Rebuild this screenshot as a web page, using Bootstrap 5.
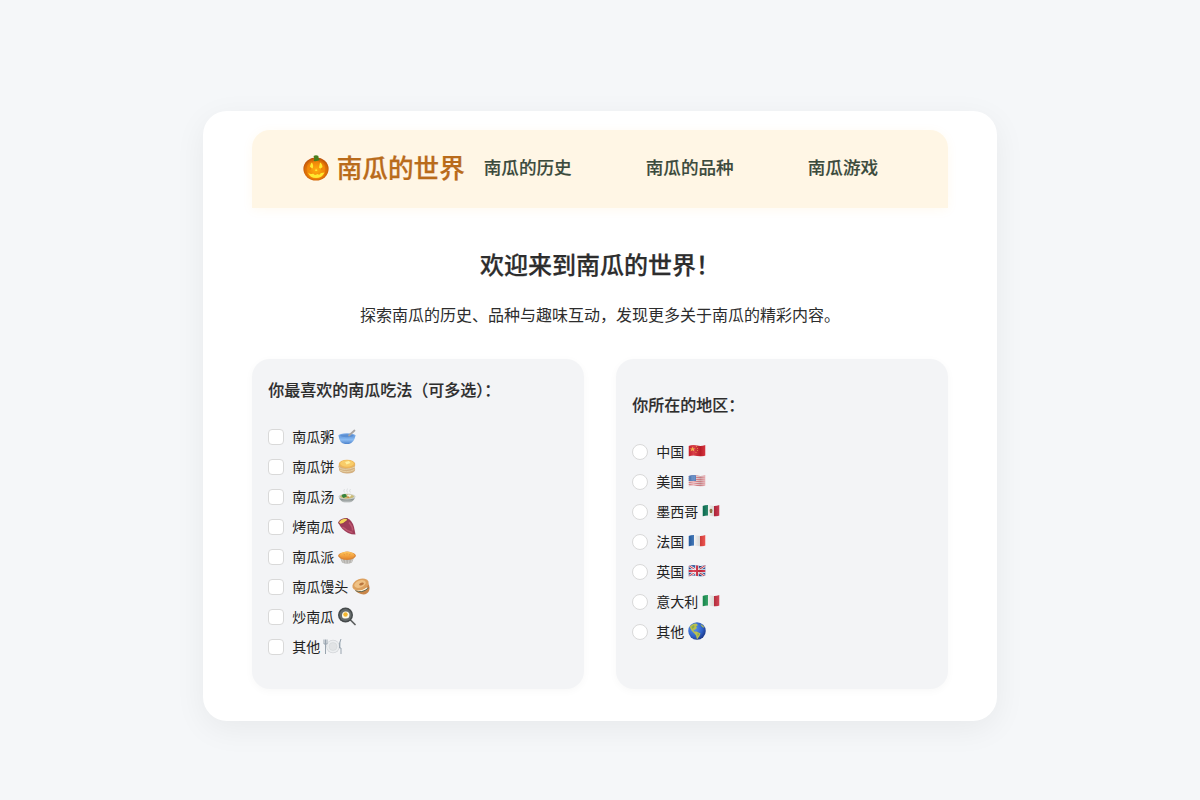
<!DOCTYPE html>
<html lang="zh-CN">
<head>
<meta charset="utf-8">
<title>南瓜的世界</title>
<link href="https://cdn.jsdelivr.net/npm/bootstrap@5.3.0/dist/css/bootstrap.min.css" rel="stylesheet">
<style>
body{background:#f5f7f9;font-family:"Noto Sans CJK SC",sans-serif;color:#2d2d2d;height:800px;overflow:hidden}
.shell{width:794.5px;height:610px;margin:111px auto 0;padding:19px 49px 0;border-radius:24px;background:#fff;box-shadow:0 8px 32px rgba(0,0,0,.06)}
.topbar{height:77.5px;padding:0 51px 2px;border-radius:18px 18px 0 0;background:#fff6e5;box-shadow:0 2px 12px rgba(255,166,0,.06)}
.brand{font-size:25.6px;font-weight:500;color:#b96b1b;margin-right:19px;line-height:38px;-webkit-text-stroke:.25px}
.brand svg{width:26px;height:26px;margin-right:8px}
.brand span,.links{padding-bottom:2px}
.links{gap:74px}
.links a{font-size:17.6px;font-weight:500;color:#3b4a3c;text-decoration:none;line-height:26px;white-space:nowrap;-webkit-text-stroke:.15px}
h1{font-size:24px;font-weight:500;line-height:36px;margin:38.5px 0 0;-webkit-text-stroke:.25px}
.intro{font-size:16px;line-height:24px;margin:20px 0 33px}
.panels{gap:32px}
.panel{flex:1;height:330px;padding:17px 16px 27px 16.5px;border-radius:18px;background:#f3f4f6;box-shadow:0 2px 8px rgba(0,0,0,.03)}
.panel+.panel{padding-left:16px}
h2{font-size:16px;font-weight:500;line-height:24px;margin:0 0 21px;-webkit-text-stroke:.15px}
.choice{height:30px;font-size:14px;line-height:20px;color:#222;padding:0 0 2px;margin:0}
.choice .form-check-input{width:16px;height:16px;margin:2px 8px 0 0;border:1px solid #d9d9d9;float:none;flex:none}
.choice .form-check-input[type=checkbox]{border-radius:4px}
.choice svg{width:18px;height:18px;margin:2px 0 0 4px;overflow:visible}
</style>
</head>
<body>
<svg width="0" height="0" class="position-absolute">
<defs>
<radialGradient id="gp" cx=".5" cy=".55" r=".6"><stop offset="0" stop-color="#ffae10"/><stop offset=".6" stop-color="#f08408"/><stop offset="1" stop-color="#a83c08"/></radialGradient>
<linearGradient id="gb" x2="0" y2="1"><stop offset="0" stop-color="#5d97de"/><stop offset=".5" stop-color="#8cbcf2"/><stop offset="1" stop-color="#4c82cc"/></linearGradient>
<linearGradient id="gg" x2="0" y2="1"><stop offset="0" stop-color="#c9cdca"/><stop offset=".5" stop-color="#8e9694"/><stop offset="1" stop-color="#c4c8c8"/></linearGradient>
<linearGradient id="go" x2="0" y2="1"><stop offset="0" stop-color="#ffc65e"/><stop offset="1" stop-color="#e88b2e"/></linearGradient>
<radialGradient id="ge" cx=".35" cy=".35" r=".7"><stop offset="0" stop-color="#5c97f0"/><stop offset=".65" stop-color="#2f62c8"/><stop offset="1" stop-color="#1b3788"/></radialGradient>
<linearGradient id="gf"><stop offset="0" stop-color="#000" stop-opacity=".08"/><stop offset=".3" stop-color="#fff" stop-opacity=".14"/><stop offset=".7" stop-color="#000" stop-opacity=".13"/><stop offset="1" stop-color="#fff" stop-opacity=".08"/></linearGradient>
<clipPath id="wave"><path d="M1 6Q10 3 18 5T35 4V25Q27 28 18 26T1 27Z"/></clipPath>
</defs>
</svg>
<main class="shell">
<header class="topbar d-flex align-items-center">
<div class="brand d-flex align-items-center text-nowrap"><svg viewBox="0 0 26 26"><ellipse cx="13" cy="14" rx="12.6" ry="11.5" fill="url(#gp)"/><path d="M8 4Q1 9 4 20M18 4Q25 9 22 20M11 4Q7 8 7 15M15 4Q19 8 19 15" fill="none" stroke="#c95f0a" stroke-width=".7" opacity=".5"/><path d="M10.5 6Q12 4 10.5 1Q13-.5 15.5 1Q15 4 17 5Q14 6.5 10.5 6Z" fill="#477e1c"/><path d="M7 12Q7.5 8 9 7.5Q11 11 9.5 13.5ZM17 7.5Q19 8 19.5 12Q17.5 14.5 16 12.5ZM12 16L13 13.5L14.5 16ZM5 17.5Q8 20 10 18.5L12 20L15 19L16 20L18 18L21.5 17.5Q19 23 13 23Q7 23 5 17.5Z" fill="#ffe931"/></svg><span>南瓜的世界</span></div>
<nav class="links d-flex"><a href="#">南瓜的历史</a><a href="#">南瓜的品种</a><a href="#">南瓜游戏</a></nav>
</header>
<section class="text-center">
<h1>欢迎来到南瓜的世界！</h1>
<p class="intro">探索南瓜的历史、品种与趣味互动，发现更多关于南瓜的精彩内容。</p>
</section>
<div class="panels d-flex">
<section class="panel d-flex flex-column justify-content-center">
<h2>你最喜欢的南瓜吃法（可多选）：</h2>
<label class="choice d-flex align-items-center"><input class="form-check-input" type="checkbox">南瓜粥<svg viewBox="0 0 36 36"><path d="M1 15Q3 31 14 32H22Q32 30 35 15Z" fill="url(#gb)"/><ellipse cx="18" cy="15" rx="17" ry="4.5" fill="#78a9e7"/><ellipse cx="18" cy="15.5" rx="14" ry="2.8" fill="#5c8fd2"/><path d="M22 15L33 5" stroke="#a9a4a2" stroke-width="3.5" stroke-linecap="round"/></svg></label>
<label class="choice d-flex align-items-center"><input class="form-check-input" type="checkbox">南瓜饼<svg viewBox="0 0 36 36"><path d="M2 12Q0 18 2 20Q1 24 4 27Q10 32 20 31Q31 31 34 25Q35 22 33 19Q35 16 34 11Z" fill="#d4b080"/><path d="M2 19Q12 27 34 18M3 24Q17 31 33 23" fill="none" stroke="#e6d0a4" stroke-width="2"/><ellipse cx="18" cy="12" rx="16.5" ry="8.5" fill="#ecb55a"/><ellipse cx="18" cy="11" rx="13.5" ry="6.5" fill="#f8cc69"/><path d="M14 8L22 6L25 10L17 13Z" fill="#fff0a0"/></svg></label>
<label class="choice d-flex align-items-center"><input class="form-check-input" type="checkbox">南瓜汤<svg viewBox="0 0 36 36"><path d="M13 9Q10 6 13 2M19 9Q16 6 19 1M25 9Q21 6 25 2" fill="none" stroke="#d5d8da" stroke-width="1.5"/><path d="M1 17Q5 28 13 29H23Q31 28 35 17Z" fill="url(#gg)"/><ellipse cx="18" cy="17" rx="17" ry="6" fill="#d0d3cf"/><ellipse cx="18" cy="17" rx="14" ry="4.5" fill="#c9ba75"/><path d="M7 16Q8 11 15 12L18 17L11 20Z" fill="#35843d"/><path d="M20 13L27 14L24 18L18 16Z" fill="#f6f2df"/><path d="M16 18L21 17L22 20Z" fill="#d6752e"/></svg></label>
<label class="choice d-flex align-items-center"><input class="form-check-input" type="checkbox">烤南瓜<svg viewBox="0 0 36 36"><path d="M1 10Q7 2 19 1Q28 4 32 18L35 33Q27 33 20 30Q6 22 1 10Z" fill="#9e3c58"/><path d="M9 18Q19 27 29 29M22 9Q30 18 29 25" fill="none" stroke="#bd5871" stroke-width="3"/><path d="M0 10Q2 2 14 0Q22-1 20 4Q14 11 4 13Z" fill="#8f3b4c"/><path d="M2 9Q5 3 14 1.5Q20 1 17 5Q12 10 5 11.5Z" fill="#f3d458"/></svg></label>
<label class="choice d-flex align-items-center"><input class="form-check-input" type="checkbox">南瓜派<svg viewBox="0 0 36 36"><path d="M3 17L8 29Q18 34 28 29L33 17Z" fill="#b4b2ae"/><path d="M8 21L11 29M15 22L16 31M22 22L21 31M29 21L26 29" stroke="#d8d7d3" stroke-width="1.5"/><path d="M0 16Q1 10 10 9Q18 5 27 9Q35 10 36 16Q31 24 18 24Q5 24 0 16Z" fill="#da8738"/><ellipse cx="18" cy="14.5" rx="15" ry="7" fill="url(#go)"/><path d="M11 12L14 14M18 10V13M25 12L22 14" stroke="#d88532"/></svg></label>
<label class="choice d-flex align-items-center"><input class="form-check-input" type="checkbox">南瓜馒头<svg viewBox="0 0 36 36"><path d="M2 15Q4 28 18 32Q29 35 34 26Q37 18 32 11Z" fill="#c98649"/><path d="M4 20Q14 31 31 20" fill="none" stroke="#fff5df" stroke-width="4"/><path d="M7 25Q19 32 33 20" fill="none" stroke="#56614d" stroke-width="2"/><ellipse cx="17" cy="13" rx="17" ry="11" transform="rotate(-20 17 13)" fill="#dca05e"/><ellipse cx="16" cy="12" rx="12" ry="7" transform="rotate(-20 16 12)" fill="#efc184"/><ellipse cx="19" cy="12" rx="5" ry="2.5" transform="rotate(-20 19 12)" fill="#b9753c"/></svg></label>
<label class="choice d-flex align-items-center"><input class="form-check-input" type="checkbox">炒南瓜<svg viewBox="0 0 36 36"><path d="M24 23L34 33" stroke="#5d6061" stroke-width="3.5" stroke-linecap="round"/><circle cx="15" cy="14" r="15" fill="#454a4b"/><circle cx="15" cy="14" r="12" fill="#666c6c"/><path d="M8 15Q8 8 14 7Q23 6 23 14Q23 22 14 21Q8 22 8 15Z" fill="#fffbe9"/><circle cx="15" cy="13" r="4.5" fill="#f5b72f"/></svg></label>
<label class="choice d-flex align-items-center"><input class="form-check-input" type="checkbox">其他<svg viewBox="0 0 36 36"><circle cx="18" cy="17" r="13.5" fill="#d3d6d9"/><circle cx="18" cy="17" r="12" fill="#eceef0"/><circle cx="18" cy="17" r="8" fill="#e1e3e5" stroke="#cfd2d5"/><path d="M0 3V12H6V3M3 3V32" fill="none" stroke="#99a4af" stroke-width="2"/><path d="M34 2Q30 8 31 20H34V32" fill="#d4dbe0" stroke="#99a4af" stroke-width="2"/></svg></label>
</section>
<section class="panel d-flex flex-column justify-content-center">
<h2>你所在的地区：</h2>
<label class="choice d-flex align-items-center"><input class="form-check-input" type="radio" name="region">中国<svg viewBox="0 0 36 36"><g clip-path="url(#wave)"><path d="M0 0H36V36H0Z" fill="#d4212e"/><path d="M9 7L10.5 11H15L11.5 13L13 17L9 14.5L5 17L6.5 13L3 11H7.5Z" fill="#f5ae35"/><path d="M16 7H18M18 11H20M18 15H20M15 19H17" stroke="#f5ae35" stroke-width="1.5"/><path d="M0 0H36V36H0Z" fill="url(#gf)"/></g></svg></label>
<label class="choice d-flex align-items-center"><input class="form-check-input" type="radio" name="region">美国<svg viewBox="0 0 36 36"><g clip-path="url(#wave)"><path d="M0 0H36V36H0Z" fill="#f3e9e9"/><path d="M0 7Q18 4 36 6M0 11Q18 8 36 10M0 15Q18 12 36 14M0 19Q18 16 36 18M0 23Q18 20 36 22M0 27Q18 24 36 26" fill="none" stroke="#df6f79" stroke-width="2"/><path d="M0 3H16V16H0Z" fill="#4e7cbd"/><path d="M3 8H14M3 12H14" stroke="#c7d5e9" stroke-dasharray="1 2"/><path d="M0 0H36V36H0Z" fill="url(#gf)"/></g></svg></label>
<label class="choice d-flex align-items-center"><input class="form-check-input" type="radio" name="region">墨西哥<svg viewBox="0 0 36 36"><g clip-path="url(#wave)"><path d="M0 0H36V36H0Z" fill="#f5f5f1"/><path d="M0 0H12V36H0Z" fill="#087253"/><path d="M24 0H36V36H24Z" fill="#c62a42"/><path d="M15 14Q18 9 21 14L20 20H16Z" fill="#91733d"/><path d="M0 0H36V36H0Z" fill="url(#gf)"/></g></svg></label>
<label class="choice d-flex align-items-center"><input class="form-check-input" type="radio" name="region">法国<svg viewBox="0 0 36 36"><g clip-path="url(#wave)"><path d="M0 0H36V36H0Z" fill="#f5f5f5"/><path d="M0 0H12V36H0Z" fill="#2560aa"/><path d="M24 0H36V36H24Z" fill="#ed4642"/><path d="M0 0H36V36H0Z" fill="url(#gf)"/></g></svg></label>
<label class="choice d-flex align-items-center"><input class="form-check-input" type="radio" name="region">英国<svg viewBox="0 0 36 36"><g clip-path="url(#wave)"><path d="M0 0H36V36H0Z" fill="#264d98"/><path d="M0 4L36 28M0 28L36 4" stroke="#eee" stroke-width="5"/><path d="M0 4L36 28M0 28L36 4" stroke="#d52c43" stroke-width="2"/><path d="M18 0V36M0 16H36" stroke="#fff" stroke-width="7"/><path d="M18 0V36M0 16H36" stroke="#d72c43" stroke-width="4"/><path d="M0 0H36V36H0Z" fill="url(#gf)"/></g></svg></label>
<label class="choice d-flex align-items-center"><input class="form-check-input" type="radio" name="region">意大利<svg viewBox="0 0 36 36"><g clip-path="url(#wave)"><path d="M0 0H36V36H0Z" fill="#f5f5f1"/><path d="M0 0H12V36H0Z" fill="#16914f"/><path d="M24 0H36V36H24Z" fill="#cf3547"/><path d="M0 0H36V36H0Z" fill="url(#gf)"/></g></svg></label>
<label class="choice d-flex align-items-center"><input class="form-check-input" type="radio" name="region">其他<svg viewBox="0 0 36 36"><circle cx="18" cy="16" r="17.5" fill="url(#ge)"/><path d="M3 8Q8 1 16 1L20 4L16 7L18 10L13 14L11 13L12 17L17 17L25 21L23 26L18 33L16 25L12 20L7 15L5 11ZM25 2Q31 5 33 9L30 9L27 6Z" fill="#b9c04f"/><path d="M7 8L12 4L13 8L9 12ZM19 20L23 22L19 27Z" fill="#88aa4d"/></svg></label>
</section>
</div>
</main>
<script src="https://cdn.jsdelivr.net/npm/bootstrap@5.3.0/dist/js/bootstrap.bundle.min.js"></script>
</body>
</html>
